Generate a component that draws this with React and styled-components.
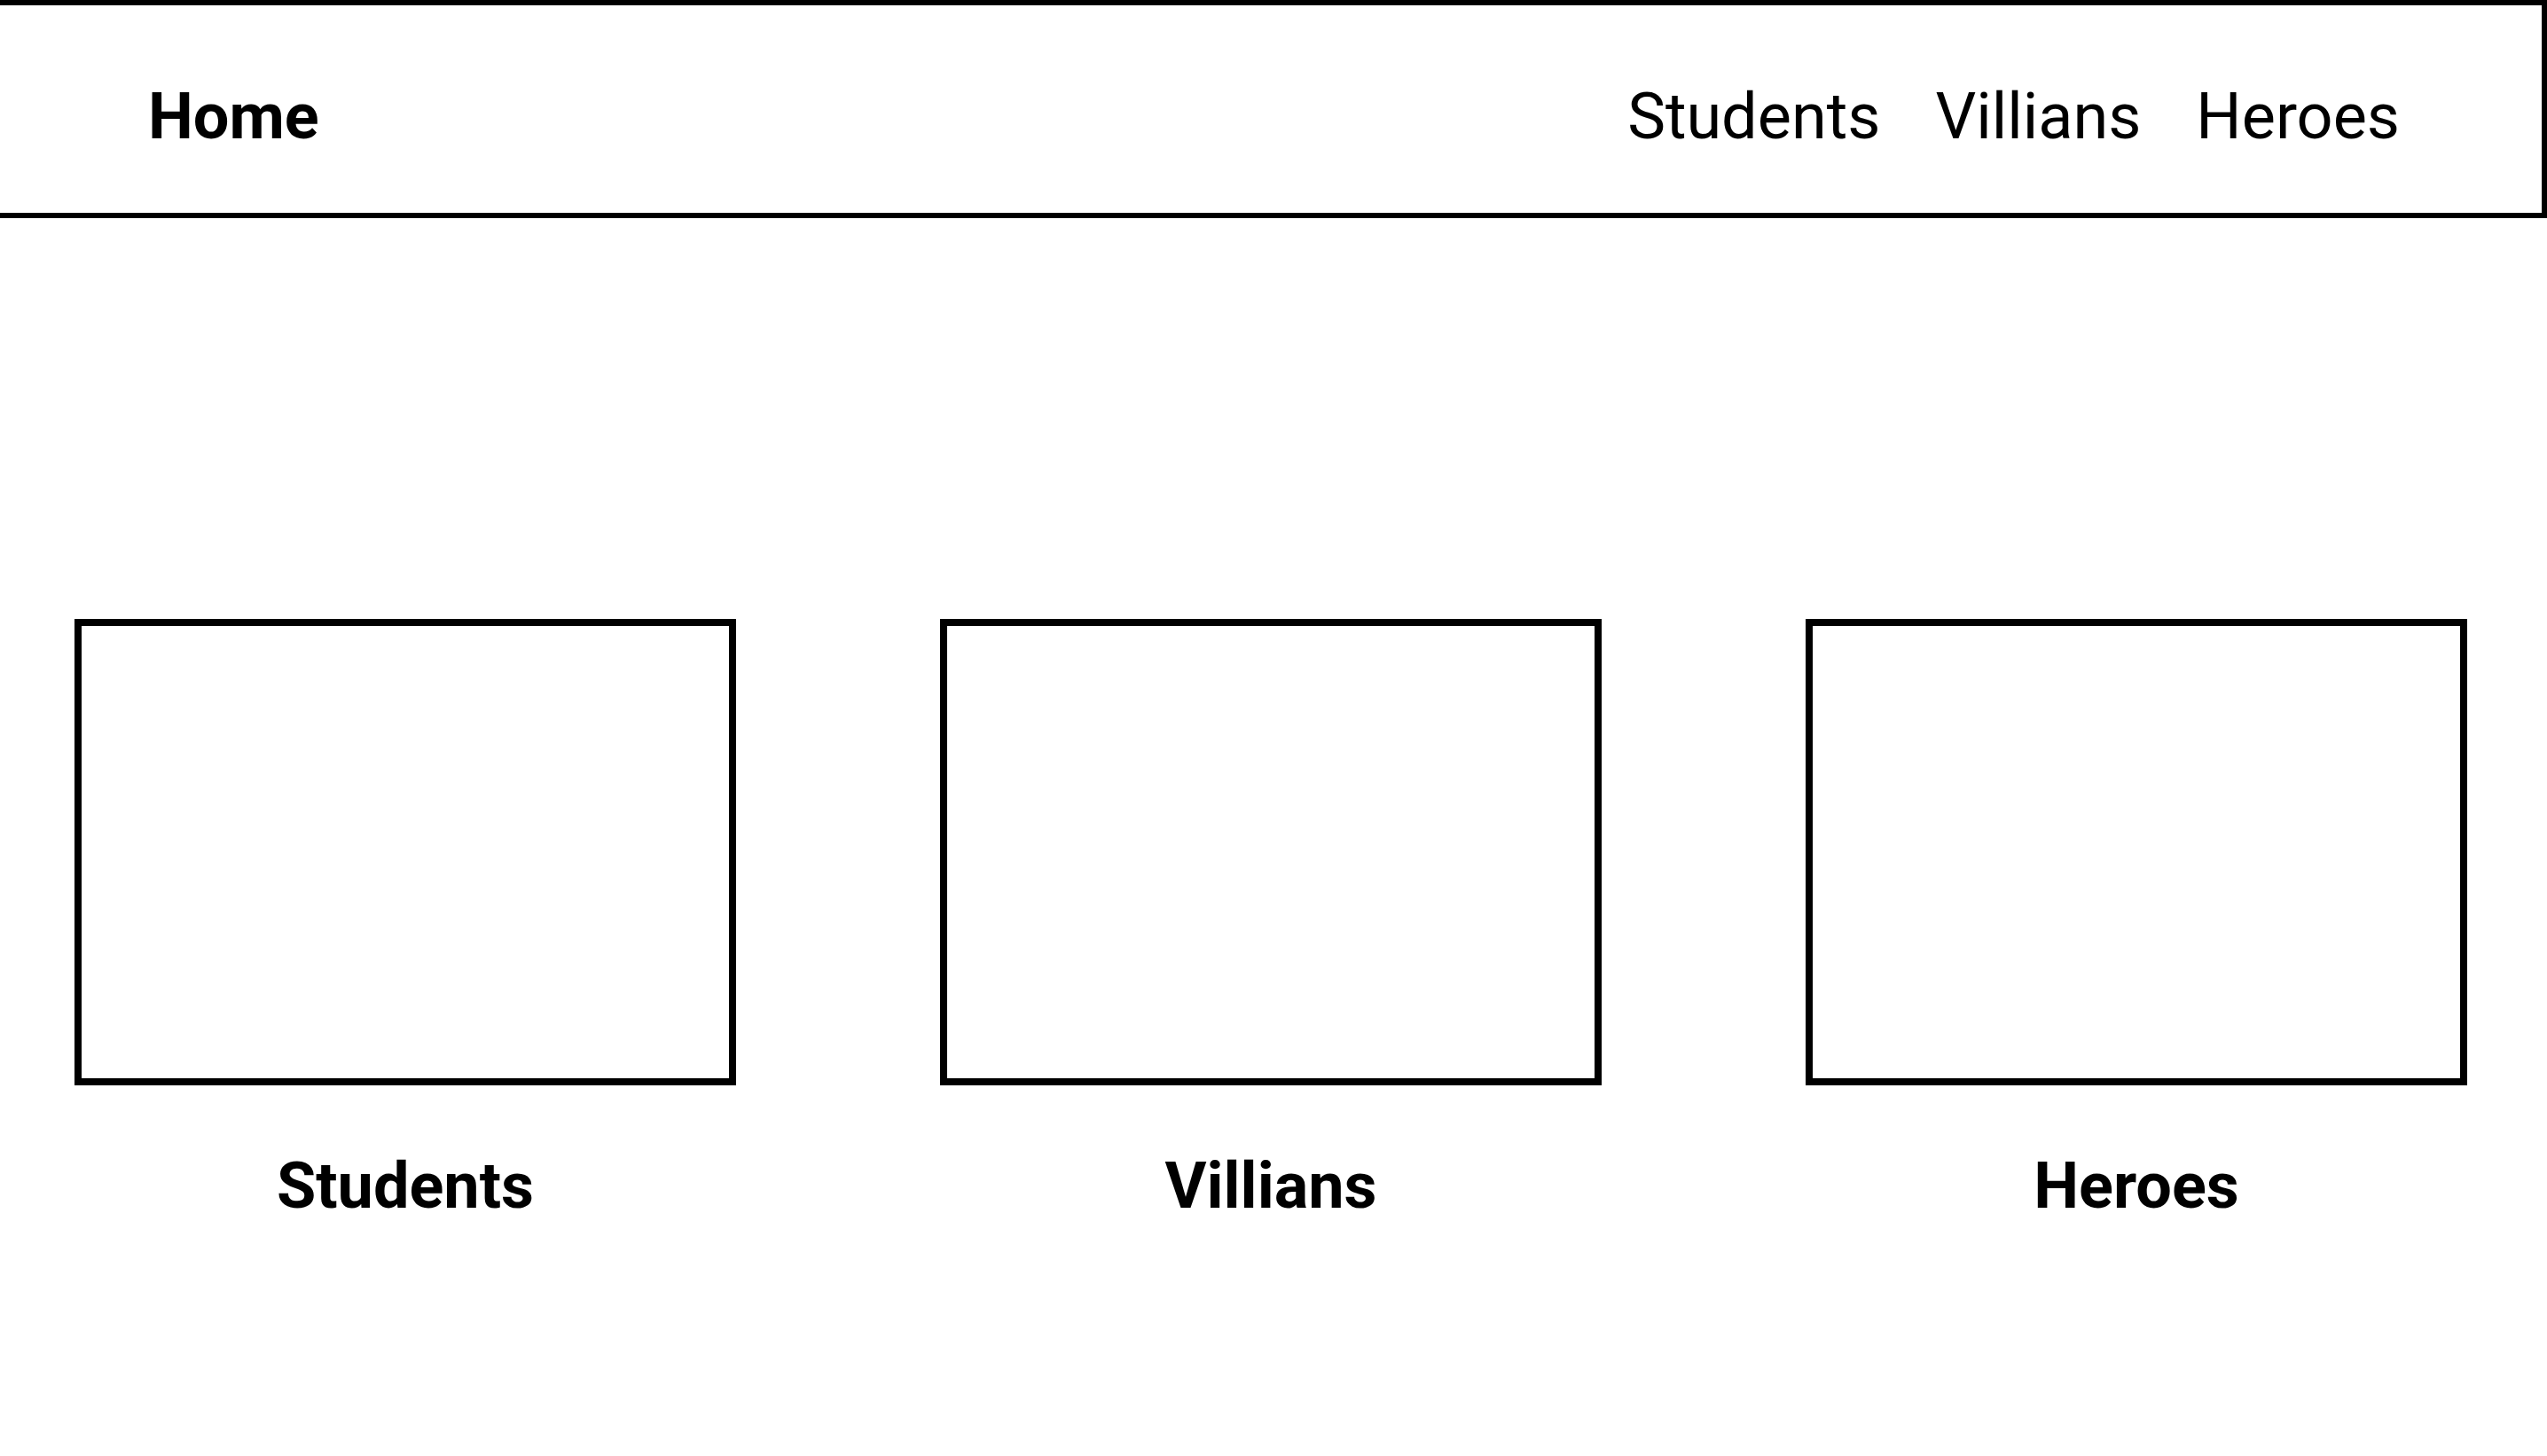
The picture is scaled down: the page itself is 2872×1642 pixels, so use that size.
import styled, { createGlobalStyle } from "styled-components";

const GlobalStyle = createGlobalStyle`
  * {
    box-sizing: border-box;
  }
  body {
    margin: 0;
    background: #ffffff;
    color: #000000;
    font-family: Roboto, "Liberation Sans", sans-serif;
  }
`;

const sections = ["Students", "Villians", "Heroes"];

const App = () => {
  return (
    <>
      <GlobalStyle />
      <Navbar>
        <Brand href="#">Home</Brand>
        <NavLinks>
          {sections.map((name) => (
            <NavLink key={name} href="#">
              {name}
            </NavLink>
          ))}
        </NavLinks>
      </Navbar>
      <CardRow>
        {sections.map((name) => (
          <Card key={name}>
            <CardImage />
            <CardTitle>{name}</CardTitle>
          </Card>
        ))}
      </CardRow>
    </>
  );
};

export default App;

const Navbar = styled.nav`
  width: 100%;
  height: 246px;
  display: flex;
  justify-content: space-between;
  align-items: center;
  padding: 16px 160px 0 167px;
  border: 6px solid #000;
  border-left: none;
`;

const Brand = styled.a`
  font-size: 72px;
  font-weight: 700;
  color: #000;
  text-decoration: none;
`;

const NavLinks = styled.div`
  display: flex;
  align-items: center;
  gap: 62px;
`;

const NavLink = styled.a`
  font-size: 72px;
  font-weight: 400;
  color: #000;
  text-decoration: none;
`;

const CardRow = styled.main`
  display: flex;
  gap: 230px;
  padding: 452px 0 0 84px;
`;

const Card = styled.div`
  width: 746px;
  display: flex;
  flex-direction: column;
  align-items: center;
`;

const CardImage = styled.div`
  width: 100%;
  height: 526px;
  border: 8px solid #000;
  background: #fff;
`;

const CardTitle = styled.h2`
  margin: 71px 0 0;
  font-size: 72px;
  font-weight: 700;
  line-height: normal;
`;
